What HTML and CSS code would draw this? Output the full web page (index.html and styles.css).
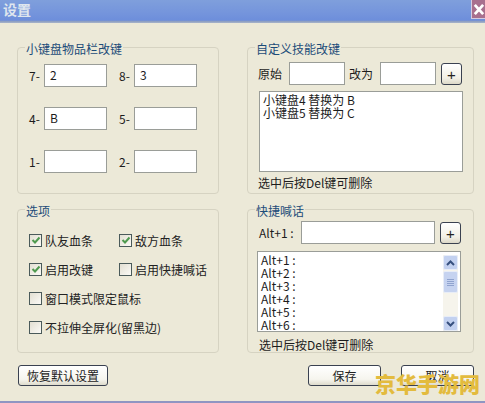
FILE: index.html
```html
<!DOCTYPE html>
<html lang="zh">
<head>
<meta charset="utf-8">
<title>设置</title>
<link rel="stylesheet" href="styles.css">
</head>
<body>
<div class="dialog">
  <header class="titlebar">
    <span class="title">设置</span>
    <span class="close"><svg width="14" height="19" viewBox="0 0 14 19"><path d="M3 4.500 L12 14.500 M12 4.500 L3 14.500" stroke="#fff" stroke-width="3" fill="none"/></svg></span>
  </header>
  <main class="panels">
    <section class="group keys">
      <span class="legend">小键盘物品栏改键</span>
      <div class="keygrid">
        <span class="k">7-</span><input class="field" value="2"><span class="k">8-</span><input class="field" value="3">
        <span class="k">4-</span><input class="field" value="B"><span class="k">5-</span><input class="field">
        <span class="k">1-</span><input class="field"><span class="k">2-</span><input class="field">
      </div>
    </section>
    <section class="group custom">
      <span class="legend legend-r">自定义技能改键</span>
      <div class="row">
        <span class="lbl">原始</span><input class="field short"><span class="lbl second">改为</span><input class="field short"><button class="plus">+</button>
      </div>
      <div class="list list-a">
        <div>小键盘4 替换为 B</div>
        <div>小键盘5 替换为 C</div>
      </div>
      <p class="hint">选中后按Del键可删除</p>
    </section>
    <section class="group options">
      <span class="legend">选项</span>
      <div class="checks">
        <label class="check"><span class="box"><svg width="10" height="10" viewBox="0 0 10 10"><path d="M1.500 5 L4 7.500 L8.500 2.500" stroke="#4f9a4f" stroke-width="2" fill="none"/></svg></span>队友血条</label>
        <label class="check"><span class="box"><svg width="10" height="10" viewBox="0 0 10 10"><path d="M1.500 5 L4 7.500 L8.500 2.500" stroke="#4f9a4f" stroke-width="2" fill="none"/></svg></span>敌方血条</label>
        <label class="check"><span class="box"><svg width="10" height="10" viewBox="0 0 10 10"><path d="M1.500 5 L4 7.500 L8.500 2.500" stroke="#4f9a4f" stroke-width="2" fill="none"/></svg></span>启用改键</label>
        <label class="check"><span class="box"></span>启用快捷喊话</label>
        <label class="check wide"><span class="box"></span>窗口模式限定鼠标</label>
        <label class="check wide"><span class="box"></span>不拉伸全屏化(留黑边)</label>
      </div>
    </section>
    <section class="group chat">
      <span class="legend legend-r">快捷喊话</span>
      <div class="row">
        <span class="alt">Alt+1 :</span><input class="field long"><button class="plus">+</button>
      </div>
      <div class="list list-b">
        <div class="lines">
          <div>Alt+1 :</div><div>Alt+2 :</div><div>Alt+3 :</div><div>Alt+4 :</div><div>Alt+5 :</div><div>Alt+6 :</div>
        </div>
        <div class="scroll">
          <span class="sbtn"><svg width="11" height="8" viewBox="0 0 11 8"><path d="M2 6 L5.500 2.500 L9 6" stroke="#37507f" stroke-width="2" fill="none"/></svg></span>
          <span class="thumb"><i></i><i></i><i></i><i></i></span>
          <span class="track"></span>
          <span class="sbtn"><svg width="11" height="8" viewBox="0 0 11 8"><path d="M2 2 L5.500 5.500 L9 2" stroke="#37507f" stroke-width="2" fill="none"/></svg></span>
        </div>
      </div>
      <p class="hint">选中后按Del键可删除</p>
    </section>
  </main>
  <footer class="actions">
    <button class="btn reset">恢复默认设置</button>
    <span class="spacer"></span>
    <button class="btn save">保存</button>
    <button class="btn">取消</button>
  </footer>
  <span class="watermark">京华手游网</span>
</div>
</body>
</html>
```

FILE: styles.css
```css
* { box-sizing: border-box; }
html, body { margin: 0; padding: 0; }
body {
  width: 485px;
  height: 403px;
  overflow: hidden;
  font: 12px/13px "Noto Sans CJK SC", "Liberation Sans", sans-serif;
  color: #1c1c1c;
  background: #ece9d8;
}
.dialog {
  position: relative;
  display: flex;
  flex-direction: column;
  height: 403px;
  border-bottom: 2px solid #8f95c2;
}
.titlebar {
  display: flex;
  justify-content: space-between;
  align-items: flex-start;
  height: 23px;
  background: linear-gradient(#7f9fdc 0, #7494dc 60%, #6d8edb 88%, #8a9cc0 92%, #a9b5cb 100%);
}
.title {
  padding: 1px 0 0 3px;
  font-size: 14px;
  line-height: 17px;
  font-weight: 700;
  color: #dfe6ee;
}
.close {
  display: flex;
  width: 14px;
  height: 19px;
  background: #a8708f;
  border-left: 1px solid #d5cbe0;
  border-bottom: 1px solid #d5cbe0;
}
.panels {
  display: grid;
  grid-template-columns: 202px 227px;
  grid-template-rows: 147px 144px;
  column-gap: 28px;
  row-gap: 15px;
  margin: 24px 0 0 17px;
}
.group {
  position: relative;
  border: 1px solid #d6d3c2;
  border-radius: 4px;
}
.legend {
  position: absolute;
  top: -7px;
  left: 7px;
  padding: 0 1px;
  line-height: 15px;
  color: #1d4c78;
  background: #ece9d8;
}
.legend-r { left: 7px; }
.field {
  display: block;
  height: 23px;
  width: 63px;
  margin: 0;
  padding: 0 0 3px 5px;
  font: inherit;
  color: #1c1c1c;
  background: #fff;
  border: 1px solid #9a9d98;
  border-radius: 0;
  outline: none;
}
.short { width: 56px; }
.long { width: 134px; }
.keys { padding: 16px 0 0 11px; }
.keygrid {
  display: grid;
  grid-template-columns: 15px 63px 27px 63px;
  grid-auto-rows: 23px;
  row-gap: 20px;
  align-items: center;
}
.keygrid .k:nth-child(4n+3) { margin-left: 12px; }
.k { white-space: nowrap; }
.row {
  display: flex;
  align-items: center;
  height: 23px;
}
.lbl { width: 24px; margin-right: 7px; }
.second { margin-left: 4px; }
.alt { width: 42px; }
.plus {
  display: block;
  width: 21px;
  height: 22px;
  margin: 1px 0 0 5px;
  padding: 0;
  font: 15px/19px "Liberation Sans", sans-serif;
  color: #222;
  background: linear-gradient(#fff, #f2f0e6 70%, #dcd8c8);
  border: 1px solid #3a4150;
  border-radius: 3px;
}
.list {
  background: #fff;
  border: 1px solid #9a9d98;
}
.custom { padding: 14px 0 0 10px; }
.list-a {
  width: 204px;
  height: 81px;
  margin: 6px 0 0 1px;
  padding: 1px 0 0 3px;
}
.hint {
  margin: 4px 0 0;
  line-height: 14px;
  white-space: nowrap;
}
.options { padding: 23px 0 0 11px; }
.checks {
  display: grid;
  grid-template-columns: 90px 100px;
  grid-auto-rows: 14px;
  row-gap: 15px;
}
.check {
  display: flex;
  align-items: center;
  white-space: nowrap;
  color: #222;
}
.wide { grid-column: 1 / -1; }
.box {
  display: flex;
  align-items: center;
  justify-content: center;
  flex: none;
  width: 13px;
  height: 13px;
  margin-right: 3px;
  background: linear-gradient(135deg, #e2dfd2, #fbfaf6);
  border: 1px solid #4a5a5a;
}
.chat { padding: 11px 0 0 11px; }
.list-b {
  display: flex;
  justify-content: space-between;
  width: 204px;
  height: 81px;
  margin: 7px 0 0 -2px;
  padding: 1px 2px 0 3px;
  overflow: hidden;
}
.chat .hint { margin-top: 6px; }
.lines div { height: 13px; }
.scroll {
  display: flex;
  flex-direction: column;
  width: 15px;
  height: 76px;
  margin-top: 2px;
  background: #f6f4ec;
}
.sbtn {
  display: flex;
  align-items: center;
  justify-content: center;
  flex: none;
  height: 15px;
  background: #c3d1f0;
  border: 1px solid #e8edf7;
  border-radius: 2px;
}
.thumb {
  display: flex;
  flex-direction: column;
  align-items: center;
  justify-content: center;
  gap: 1px;
  flex: none;
  height: 22px;
  margin-top: 1px;
  background: #c6d3f0;
  border: 1px solid #e8edf7;
  border-radius: 2px;
}
.thumb i {
  display: block;
  width: 7px;
  height: 1px;
  background: #8fa3cf;
}
.track { flex: 1; }
.actions {
  display: flex;
  margin: 12px 0 0 18px;
  width: 456px;
}
.spacer { flex: 1; }
.btn {
  display: block;
  width: 73px;
  height: 21px;
  padding: 0;
  font: inherit;
  color: #222;
  background: linear-gradient(#fff, #f6f5ee 70%, #dedbcc);
  border: 1px solid #3a4150;
  border-radius: 3px;
}
.reset { width: 90px; }
.save { margin-right: 20px; }
.watermark {
  position: absolute;
  right: 5px;
  bottom: 5px;
  font-size: 21px;
  line-height: 26px;
  font-weight: 900;
  color: #e3bb3e;
}
```
